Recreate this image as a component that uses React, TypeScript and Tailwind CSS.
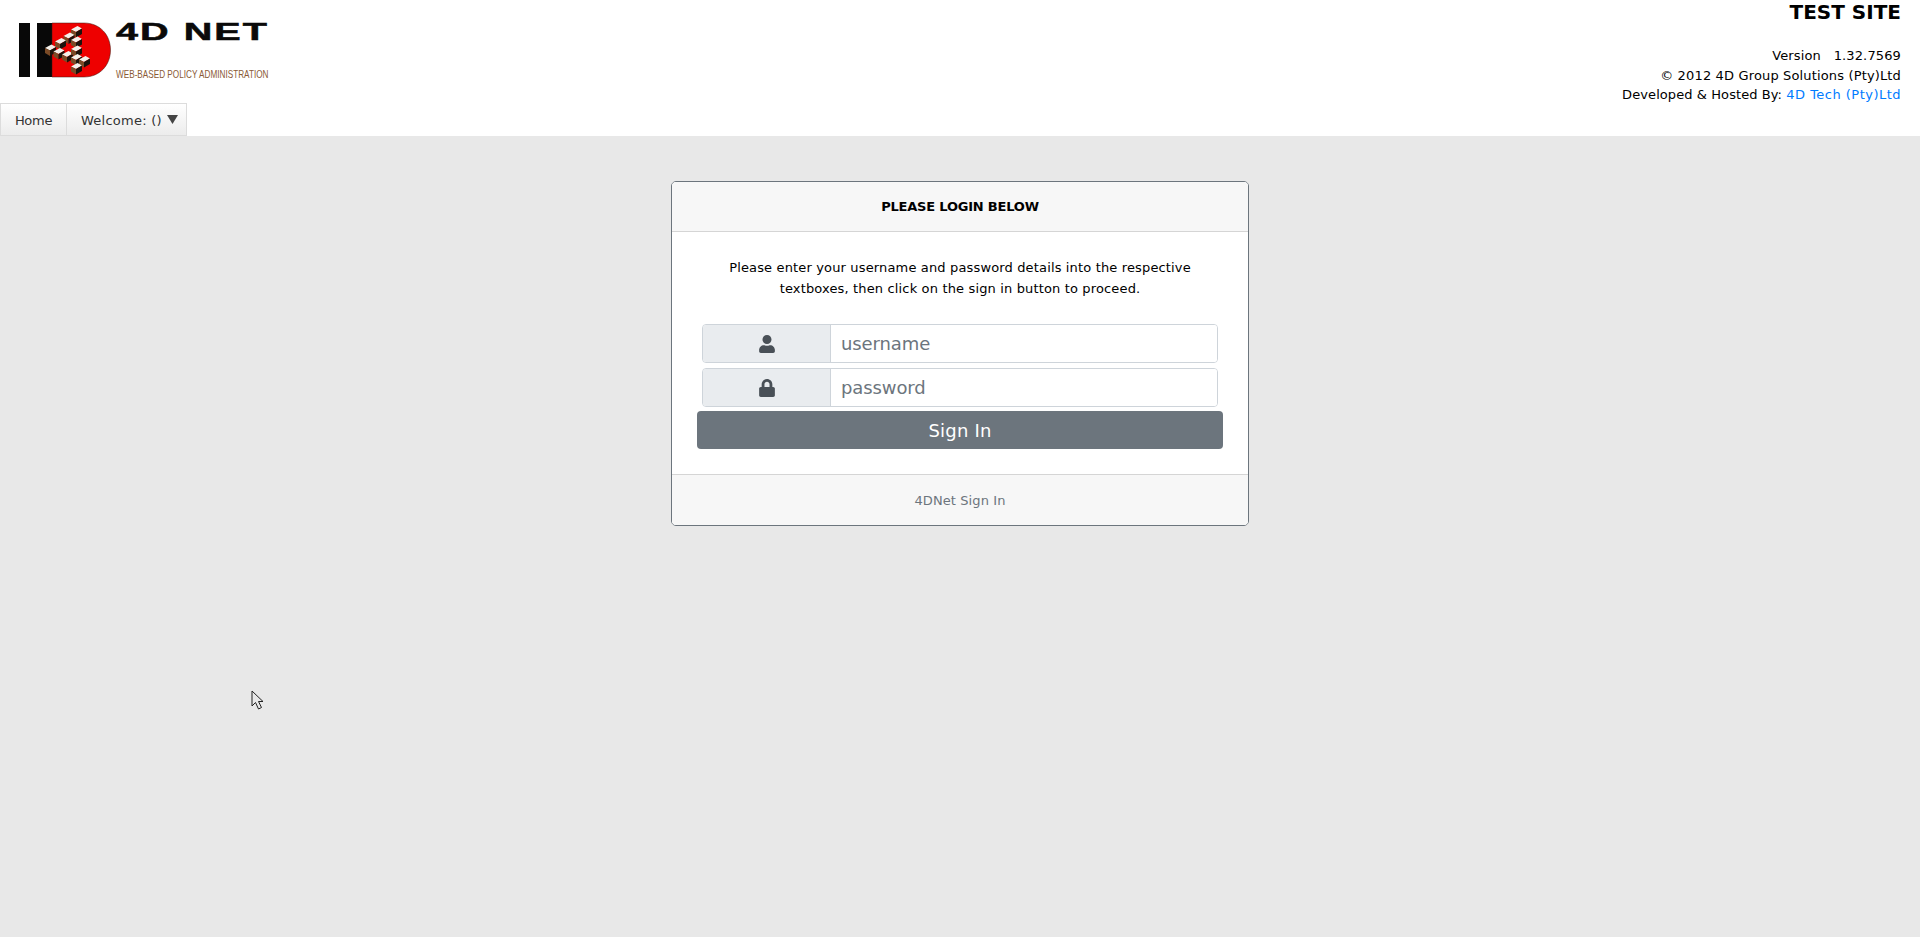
import { FaUser, FaLock } from "react-icons/fa";

const font = { fontFamily: '"DejaVu Sans", Verdana, sans-serif' };

const cubes: [number, number][] = [
  [76.5, 31], [69, 37.5], [60.5, 43], [50.5, 49.5], [59, 53], [67.5, 56],
  [76.5, 41.5], [76.5, 50.5], [76.5, 59], [84.5, 61], [76.5, 68],
];

function Cube({ x, y }: { x: number; y: number }) {
  return (
    <g>
      <polygon points={`${x - 5.5},${y - 1.5} ${x + 1},${y - 5} ${x + 5.5},${y - 2.5} ${x - 0.5},${y + 1}`} fill="#f4f0ea" />
      <polygon points={`${x - 5.5},${y - 1.5} ${x - 0.5},${y + 1} ${x - 0.5},${y + 6.5} ${x - 5.5},${y + 3.5}`} fill="#7a4a26" />
      <polygon points={`${x - 0.5},${y + 1} ${x + 5.5},${y - 2.5} ${x + 5.5},${y + 3} ${x - 0.5},${y + 6.5}`} fill="#1c120c" />
    </g>
  );
}

function Logo() {
  return (
    <svg width="290" height="90" viewBox="0 0 290 90" className="block">
      <rect x="19" y="23" width="11" height="54" fill="#080808" />
      <rect x="37" y="23" width="15" height="54" fill="#080808" />
      <path d="M52 23 H84 C100 23 110.500 35 110.500 50 C110.500 65 100 77 84 77 H52 Z" fill="#ee0000" stroke="#3a1a10" strokeWidth="0.5" />
      {cubes.map(([x, y], i) => (
        <Cube key={i} x={x} y={y} />
      ))}
      <text transform="translate(116 40) scale(1.72 1)" fontFamily="Liberation Sans, sans-serif" fontWeight="700" fontSize="23" letterSpacing="1.2" fill="#0a0a0a" stroke="#0a0a0a" strokeWidth="0.5">
        4D NET
      </text>
      <text transform="translate(116 78) scale(0.78 1)" fontFamily="Liberation Sans, sans-serif" fontSize="10.500" fill="#8a5a35">
        WEB-BASED POLICY ADMINISTRATION
      </text>
    </svg>
  );
}

function Field({ icon, placeholder, type }: { icon: React.ReactNode; placeholder: string; type: string }) {
  return (
    <div className="flex h-[39px] w-[516px] rounded-[4px] border border-[#ced4da] bg-white">
      <div className="flex w-[128px] items-center justify-center rounded-l-[3px] border-r border-[#ced4da] bg-[#e9ecef] text-[#495057]">
        {icon}
      </div>
      <input
        type={type}
        placeholder={placeholder}
        className="min-w-0 flex-1 rounded-r-[3px] bg-white px-[10px] text-[18px] tracking-[-0.1px] text-[#495057] outline-none placeholder:text-[#6c757d]"
        style={font}
      />
    </div>
  );
}

export default function App() {
  return (
    <div className="relative flex min-h-[937px] flex-col bg-[#e8e8e8] text-[13px] text-black" style={font}>
      <header className="relative h-[136px] shrink-0 bg-white">
        <div className="flex items-start justify-between">
          <div className="h-[103px]">
            <Logo />
          </div>
          <div className="pr-[19px] text-right leading-[19.5px]">
            <div className="text-[20px] font-bold leading-[24px]">TEST SITE</div>
            <div className="pt-[22px] tracking-[0.13px]">Version&nbsp;&nbsp;&nbsp;1.32.7569</div>
            <div className="tracking-[0.15px]">© 2012 4D Group Solutions (Pty)Ltd</div>
            <div className="tracking-[0.08px]">
              Developed &amp; Hosted By: <a className="tracking-[0.48px] text-[#007bff]">4D Tech (Pty)Ltd</a>
            </div>
          </div>
        </div>
        <nav className="absolute left-0 top-[103px] flex h-[33px] items-stretch border border-[#dcdcdc] bg-gradient-to-b from-white to-[#ececec] text-[13px] text-[#333]">
          <div className="flex w-[66px] items-center justify-center border-r border-[#dcdcdc] pt-[2px] tracking-[-0.3px]">Home</div>
          <div className="flex w-[119px] items-center gap-[5px] pl-[14px] pt-[2px]">
            <span className="tracking-[0.25px]">Welcome: ()</span>
            <svg width="11" height="9" viewBox="0 0 11 9" className="mb-[3px]">
              <polygon points="0,0 11,0 5.500,9" fill="#444" />
            </svg>
          </div>
        </nav>
      </header>

      <main className="flex justify-center pt-[45px]">
        <section className="flex h-[345px] w-[578px] flex-col rounded-[5px] border border-[#6c757d] bg-white">
          <div className="flex h-[50px] items-center justify-center rounded-t-[4px] border-b border-[#d5d5d5] bg-[#f7f7f7] font-bold tracking-[-0.2px]">
            PLEASE LOGIN BELOW
          </div>
          <div className="flex flex-1 flex-col items-center pt-[25px]">
            <p className="w-[500px] text-center leading-[21px] tracking-[0.15px]">
              Please enter your username and password details into the respective textboxes, then click on the sign in button to proceed.
            </p>
            <div className="mt-[25px] flex flex-col gap-[5px]">
              <Field icon={<FaUser className="h-[18px] w-[16px]" />} placeholder="username" type="text" />
              <Field icon={<FaLock className="h-[18px] w-[16px]" />} placeholder="password" type="password" />
            </div>
            <button className="mt-[4px] h-[38px] w-[526px] rounded-[4px] bg-[#6c757d] text-[18px] tracking-[0.2px] text-white">Sign In</button>
          </div>
          <div className="flex h-[51px] items-center justify-center rounded-b-[4px] border-t border-[#d5d5d5] bg-[#f7f7f7] pt-[1px] tracking-[0.1px] text-[#6c757d]">
            4DNet Sign In
          </div>
        </section>
      </main>

      <svg width="14" height="21" viewBox="0 0 14 21" className="absolute left-[251px] top-[690px]">
        <path d="M1 1 L1 16 L4.500 12.500 L7.500 19 L10.500 17.500 L7.500 11.500 L12 11.500 Z" fill="#e8e8e8" stroke="#222" strokeWidth="1" />
      </svg>
    </div>
  );
}
